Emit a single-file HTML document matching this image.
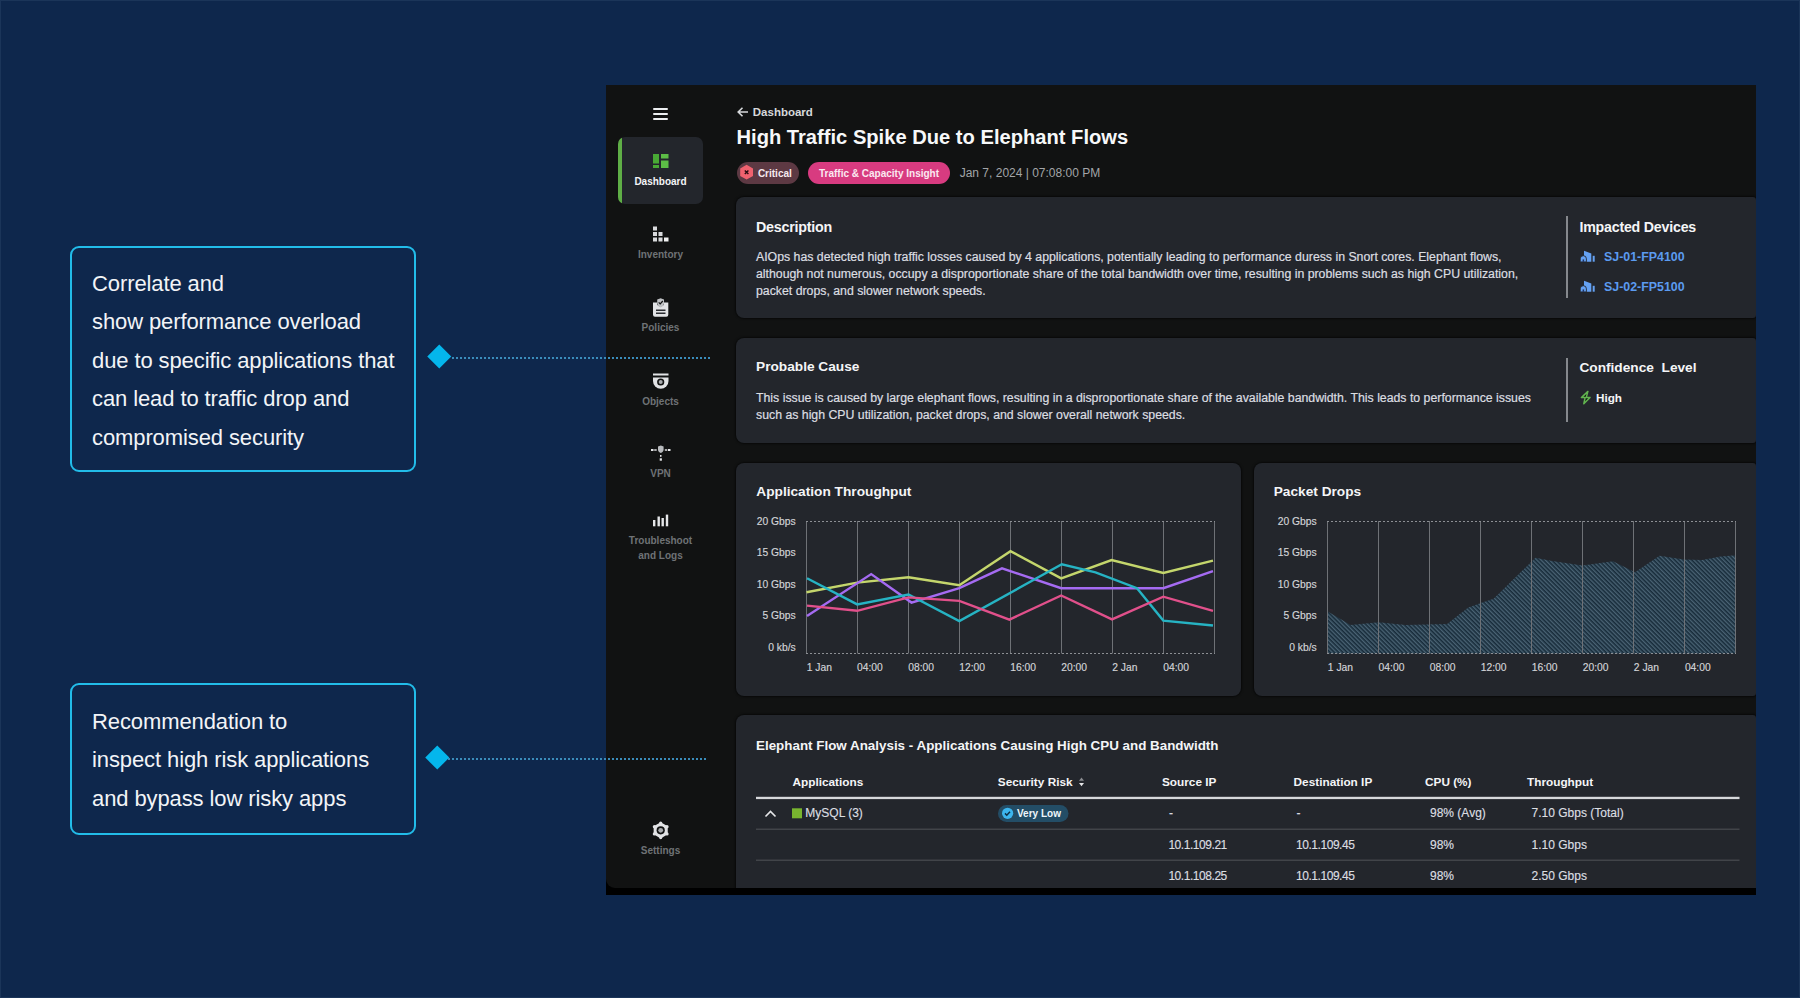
<!DOCTYPE html>
<html><head><meta charset="utf-8">
<style>
*{margin:0;padding:0;box-sizing:border-box}
html,body{width:1800px;height:998px;overflow:hidden}
body{background:#0e274c;font-family:"Liberation Sans",sans-serif;position:relative}
#edge{position:absolute;left:0;top:0;width:1800px;height:998px;border:1px solid #1b3559}
.a{position:absolute;white-space:nowrap;line-height:1}
.note{position:absolute;border:2px solid #22bce9;border-radius:9px}
.nt{position:absolute;left:92px;color:#f2f4f7;font-size:22px;line-height:1;white-space:nowrap;letter-spacing:-0.1px}
.dia{position:absolute;width:16.5px;height:16.5px;background:#04b6ec;transform:rotate(45deg)}
.dots{position:absolute;height:2px;background-image:linear-gradient(to right,#3a8cbb 50%,transparent 50%);background-size:4px 2px}
#frame{position:absolute;left:606px;top:85px;width:1150px;height:810px;background:#000}
#clip{position:absolute;left:606px;top:85px;width:1150px;height:803px;background:#111212;border-bottom-left-radius:9px;overflow:hidden}
#pg{position:absolute;left:-606px;top:-85px;width:1800px;height:998px}
.card{position:absolute;background:#23262c;border-radius:8px;box-shadow:0 0 2px 1px rgba(0,0,0,0.55)}
.h{position:absolute;white-space:nowrap;line-height:1;color:#f4f5f7;font-weight:bold;font-size:13.7px}
.b{position:absolute;white-space:nowrap;line-height:1;color:#dcdee1;font-size:12.3px;-webkit-text-stroke:0.2px #dcdee1}
.nav{position:absolute;left:607px;width:107px;text-align:center;color:#6f7276;font-size:10px;font-weight:bold;line-height:1;white-space:nowrap}
.yl{position:absolute;width:60px;text-align:right;color:#d3d5d8;font-size:10.3px;line-height:1;white-space:nowrap;-webkit-text-stroke:0.15px #d3d5d8}
.xl{position:absolute;color:#d3d5d8;font-size:10.3px;line-height:1;white-space:nowrap;-webkit-text-stroke:0.15px #d3d5d8}
.th{position:absolute;white-space:nowrap;line-height:1;color:#f4f5f7;font-weight:bold;font-size:11.8px}
.td{position:absolute;white-space:nowrap;line-height:1;color:#dcdee1;font-size:12px;-webkit-text-stroke:0.15px #dcdee1}
svg{position:absolute;left:0;top:0}
</style></head><body>
<div id="edge"></div>

<!-- annotation 1 -->
<div class="note" style="left:70px;top:246px;width:346px;height:226px"></div>
<div class="nt" style="top:272.6px">Correlate and</div>
<div class="nt" style="top:310.6px">show performance overload</div>
<div class="nt" style="top:350.1px">due to specific applications that</div>
<div class="nt" style="top:388px">can lead to traffic drop and</div>
<div class="nt" style="top:427.1px">compromised security</div>

<!-- annotation 2 -->
<div class="note" style="left:70px;top:682.6px;width:346px;height:152.6px"></div>
<div class="nt" style="top:710.8px">Recommendation to</div>
<div class="nt" style="top:748.8px">inspect high risk applications</div>
<div class="nt" style="top:787.6px">and bypass low risky apps</div>

<div id="frame"></div>
<div id="clip"><div id="pg">

<!-- sidebar -->
<div style="position:absolute;left:653px;top:107.5px;width:15px;height:2px;background:#eceef0;border-radius:1px"></div>
<div style="position:absolute;left:653px;top:112.5px;width:15px;height:2px;background:#eceef0;border-radius:1px"></div>
<div style="position:absolute;left:653px;top:117.5px;width:15px;height:2px;background:#eceef0;border-radius:1px"></div>

<div style="position:absolute;left:617.6px;top:137px;width:85.5px;height:66.5px;background:#23262c;border-radius:7px;overflow:hidden"><div style="position:absolute;left:0;top:0;width:4.5px;height:66.5px;background:#5fae46"></div></div>
<svg width="1800" height="998" viewBox="0 0 1800 998">
 <g fill="#48a935">
  <rect x="653" y="154" width="6" height="9.5"/>
  <rect x="661" y="154" width="7.5" height="4.5" fill="#5cbd46"/>
  <rect x="653" y="165" width="6" height="3"/>
  <rect x="661" y="160.5" width="7.5" height="7.5" fill="#5cbd46"/>
 </g>
 <!-- inventory -->
 <g fill="#d9dadc">
  <rect x="653" y="226.5" width="4" height="4"/>
  <rect x="653" y="232" width="4" height="4"/><rect x="658.5" y="232" width="4" height="4"/>
  <rect x="653" y="237.5" width="4" height="4"/><rect x="658.5" y="237.5" width="4" height="4"/><rect x="664" y="237.5" width="4.5" height="4" fill="#f2f2f2"/>
 </g>
 <!-- policies -->
 <path d="M653 302.5 h4 v2 a4 4 0 0 0 7 0 v-2 h4.3 v12.3 a2 2 0 0 1 -2 2 h-11.3 a2 2 0 0 1 -2 -2 z" fill="#e2e3e5"/>
 <path d="M657.2 299.5 l3.4 -1.2 l3.4 1.2 v3.5 c0 2.2 -1.6 3.6 -3.4 4.4 c-1.8 -0.8 -3.4 -2.2 -3.4 -4.4 z" fill="#bfc1c4"/>
 <path d="M658.7 302.3 l1.5 1.5 l2.6 -2.8" stroke="#111" stroke-width="1.2" fill="none"/>
 <rect x="656" y="309.5" width="9.5" height="1.5" fill="#2a2c30"/>
 <rect x="656" y="312.5" width="9.5" height="1.5" fill="#2a2c30"/>
 <!-- objects -->
 <rect x="653" y="373.5" width="15.5" height="2" fill="#e2e3e5"/>
 <path d="M653 377.5 h15.5 v3.5 a7.75 7.75 0 0 1 -15.5 0 z" fill="#e2e3e5"/>
 <circle cx="660.7" cy="382" r="3.6" fill="#111212"/>
 <circle cx="660.7" cy="382" r="2" fill="#a9abae"/>
 <!-- vpn -->
 <path d="M658 446.5 l2.8 -1 l2.8 1 v3 c0 1.8 -1.3 3 -2.8 3.6 c-1.5 -0.6 -2.8 -1.8 -2.8 -3.6 z" fill="#b9bbbe"/>
 <g fill="#e6e7e9"><rect x="651" y="449" width="2.5" height="2"/><rect x="654.2" y="449.3" width="2.5" height="1.4"/><rect x="664.8" y="449.3" width="2.5" height="1.4"/><rect x="668" y="449" width="2.5" height="2"/>
 <rect x="660" y="455" width="1.5" height="1.8"/><rect x="659.7" y="458.3" width="2.2" height="2.4"/></g>
 <!-- troubleshoot -->
 <g fill="#e6e7e9"><rect x="653" y="520" width="2.4" height="6.3"/><rect x="657.5" y="516.5" width="2.4" height="9.8"/><rect x="661.5" y="518" width="2.4" height="8.3"/><rect x="665.8" y="514.6" width="2.4" height="11.7"/></g>
 <!-- settings -->
 <path d="M660.70 823.10 L666.94 826.70 L666.94 833.90 L660.70 837.50 L654.46 833.90 L654.46 826.70 Z" fill="#e2e3e5" stroke="#e2e3e5" stroke-width="1.6" stroke-linejoin="round"/><circle cx="660.70" cy="823.00" r="1.6" fill="#e2e3e5"/><circle cx="667.02" cy="826.65" r="1.6" fill="#e2e3e5"/><circle cx="667.02" cy="833.95" r="1.6" fill="#e2e3e5"/><circle cx="660.70" cy="837.60" r="1.6" fill="#e2e3e5"/><circle cx="654.38" cy="833.95" r="1.6" fill="#e2e3e5"/><circle cx="654.38" cy="826.65" r="1.6" fill="#e2e3e5"/>
 <circle cx="660.7" cy="830.3" r="4.1" fill="#111212"/>
 <circle cx="660.7" cy="830.3" r="2.4" fill="#a9abae"/>
</svg>
<div class="nav" style="top:177.1px;color:#f4f5f7">Dashboard</div>
<div class="nav" style="top:249.6px">Inventory</div>
<div class="nav" style="top:323.4px">Policies</div>
<div class="nav" style="top:396.9px">Objects</div>
<div class="nav" style="top:469.4px">VPN</div>
<div class="nav" style="top:536.2px">Troubleshoot</div>
<div class="nav" style="top:551.3px">and Logs</div>
<div class="nav" style="top:846px">Settings</div>

<!-- header -->
<svg width="1800" height="998" viewBox="0 0 1800 998">
 <path d="M742.5 107.8 l-4.3 4.2 l4.3 4.2 M738.5 112 h9.5" stroke="#d6d8db" stroke-width="1.6" fill="none"/>
</svg>
<div class="a" style="left:752.8px;top:107px;font-size:11.5px;font-weight:bold;color:#d6d8db">Dashboard</div>
<div class="a" style="left:736.5px;top:126.9px;font-size:20.15px;font-weight:bold;color:#f7f8f9">High Traffic Spike Due to Elephant Flows</div>

<div style="position:absolute;left:737px;top:162px;width:62px;height:21.5px;border-radius:11px;background:#5d3943"></div>
<svg width="1800" height="998" viewBox="0 0 1800 998">
 <path d="M746.6 164.8 l6.4 3.7 v7.4 l-6.4 3.7 l-6.4 -3.7 v-7.4 z" fill="#f0626f"/>
 <path d="M744.8 170.5 l3.6 3.6 M748.4 170.5 l-3.6 3.6" stroke="#2a0d12" stroke-width="1.4"/>
</svg>
<div class="a" style="left:757.9px;top:168.5px;font-size:10px;font-weight:bold;color:#f6eaee">Critical</div>
<div style="position:absolute;left:808px;top:162px;width:142px;height:21.5px;border-radius:11px;background:#d83b80"></div>
<div class="a" style="left:819px;top:168.5px;font-size:10px;font-weight:bold;color:#fbe9f1">Traffic &amp; Capacity Insight</div>
<div class="a" style="left:959.7px;top:166.5px;font-size:12px;color:#a3a5a8">Jan 7, 2024 | 07:08:00 PM</div>

<!-- description card -->
<div class="card" style="left:736px;top:197px;width:1020px;height:121px;border-radius:8px 3px 3px 8px"></div>
<div class="h" style="left:756px;top:219.6px;font-size:14.3px;letter-spacing:-0.25px">Description</div>
<div class="b" style="left:756px;top:251.3px">AIOps has detected high traffic losses caused by 4 applications, potentially leading to performance duress in Snort cores. Elephant flows,</div>
<div class="b" style="left:756px;top:268px">although not numerous, occupy a disproportionate share of the total bandwidth over time, resulting in problems such as high CPU utilization,</div>
<div class="b" style="left:756px;top:284.7px">packet drops, and slower network speeds.</div>
<div style="position:absolute;left:1565.5px;top:216px;width:2px;height:82px;background:#85888d"></div>
<div class="h" style="left:1579.4px;top:220px;font-size:14.2px;letter-spacing:-0.2px">Impacted Devices</div>
<svg width="1800" height="998" viewBox="0 0 1800 998">
 <g fill="#64a1f3">
  <path d="M1584 250.8 L1591.3 253.4 V261.7 H1584 Z"/>
  <path d="M1580.2 261.9 V258.8 a3.1 3.1 0 0 1 6.2 0 V261.9 Z" stroke="#23262c" stroke-width="0.9"/>
  <rect x="1582.6" y="259.4" width="1.5" height="2.5" fill="#1e3566"/>
  <rect x="1592.7" y="255.8" width="2" height="5.9"/>
  <path d="M1584 280.8 L1591.3 283.4 V291.7 H1584 Z"/>
  <path d="M1580.2 291.9 V288.8 a3.1 3.1 0 0 1 6.2 0 V291.9 Z" stroke="#23262c" stroke-width="0.9"/>
  <rect x="1582.6" y="289.4" width="1.5" height="2.5" fill="#1e3566"/>
  <rect x="1592.7" y="285.8" width="2" height="5.9"/>
 </g>
</svg>
<div class="a" style="left:1604px;top:250.5px;font-size:12.4px;font-weight:bold;color:#5b9bf0">SJ-01-FP4100</div>
<div class="a" style="left:1604px;top:280.5px;font-size:12.4px;font-weight:bold;color:#5b9bf0">SJ-02-FP5100</div>

<!-- probable cause card -->
<div class="card" style="left:736px;top:338px;width:1020px;height:105px;border-radius:8px 3px 3px 8px"></div>
<div class="h" style="left:756px;top:360.1px">Probable Cause</div>
<div class="b" style="left:756px;top:392px">This issue is caused by large elephant flows, resulting in a disproportionate share of the available bandwidth. This leads to performance issues</div>
<div class="b" style="left:756px;top:408.6px">such as high CPU utilization, packet drops, and slower overall network speeds.</div>
<div style="position:absolute;left:1565.5px;top:358px;width:2px;height:64px;background:#85888d"></div>
<div class="h" style="left:1579.4px;top:360.6px;font-size:13.7px">Confidence&nbsp; Level</div>
<svg width="1800" height="998" viewBox="0 0 1800 998">
 <path d="M1587.9 391.4 L1581.4 397.6 L1585.1 397.6 L1583.8 403.8 L1590 397.4 L1586.3 397.4 Z" fill="#0f1a0f" stroke="#62b450" stroke-width="1.5" stroke-linejoin="round"/>
</svg>
<div class="a" style="left:1596px;top:392px;font-size:11.7px;font-weight:bold;color:#f4f5f7">High</div>

<!-- charts -->
<div class="card" style="left:736px;top:463px;width:505px;height:233px"></div>
<div class="card" style="left:1254px;top:463px;width:502px;height:233px;border-radius:8px 3px 3px 8px"></div>
<div class="h" style="left:756.3px;top:485.3px">Application Throughput</div>
<div class="h" style="left:1273.7px;top:485.3px">Packet Drops</div>

<div class="yl" style="left:735.7px;top:517px">20 Gbps</div>
<div class="yl" style="left:735.7px;top:548.4px">15 Gbps</div>
<div class="yl" style="left:735.7px;top:579.8px">10 Gbps</div>
<div class="yl" style="left:735.7px;top:611.2px">5 Gbps</div>
<div class="yl" style="left:735.7px;top:642.7px">0 kb/s</div>
<div class="xl" style="left:806.7px;top:662.5px">1 Jan</div>
<div class="xl" style="left:857px;top:662.5px">04:00</div>
<div class="xl" style="left:908.2px;top:662.5px">08:00</div>
<div class="xl" style="left:959.2px;top:662.5px">12:00</div>
<div class="xl" style="left:1010.2px;top:662.5px">16:00</div>
<div class="xl" style="left:1061.2px;top:662.5px">20:00</div>
<div class="xl" style="left:1112.2px;top:662.5px">2 Jan</div>
<div class="xl" style="left:1163.2px;top:662.5px">04:00</div>

<div class="yl" style="left:1256.7px;top:517px">20 Gbps</div>
<div class="yl" style="left:1256.7px;top:548.4px">15 Gbps</div>
<div class="yl" style="left:1256.7px;top:579.8px">10 Gbps</div>
<div class="yl" style="left:1256.7px;top:611.2px">5 Gbps</div>
<div class="yl" style="left:1256.7px;top:642.7px">0 kb/s</div>
<div class="xl" style="left:1327.8px;top:662.5px">1 Jan</div>
<div class="xl" style="left:1378.6px;top:662.5px">04:00</div>
<div class="xl" style="left:1429.7px;top:662.5px">08:00</div>
<div class="xl" style="left:1480.7px;top:662.5px">12:00</div>
<div class="xl" style="left:1531.8px;top:662.5px">16:00</div>
<div class="xl" style="left:1582.8px;top:662.5px">20:00</div>
<div class="xl" style="left:1633.8px;top:662.5px">2 Jan</div>
<div class="xl" style="left:1684.9px;top:662.5px">04:00</div>

<svg width="1800" height="998" viewBox="0 0 1800 998">
 <defs>
  <pattern id="hatch" patternUnits="userSpaceOnUse" width="3" height="3" patternTransform="rotate(-45)">
   <rect width="3" height="3" fill="#172b3a"/>
   <rect width="1.4" height="3" fill="#4a6374"/>
  </pattern>
 </defs>
 <g stroke="#6e7176" stroke-width="1">
  <path d="M806.5 521V653.5M857.5 521V653.5M908.5 521V653.5M959.5 521V653.5M1010.5 521V653.5M1061.5 521V653.5M1112.5 521V653.5M1163.5 521V653.5M1214.5 521V653.5"/>
 </g>
 <g stroke="#8c8f94" stroke-width="1" stroke-dasharray="2 2">
  <path d="M806 521.5H1215M806 653.5H1215"/>
 </g>
 <g fill="none" stroke-width="2.4" stroke-linejoin="miter">
  <polyline stroke="#c4d66c" points="806.5,592.2 857.2,582.6 908.5,577.2 959.3,585.2 1010.5,551.2 1061.2,578.4 1111.6,560.1 1163.3,572.9 1213.0,560.7"/>
  <polyline stroke="#a56bf2" points="807.0,616.1 871.2,574.1 911.5,602.6 959.3,588.1 1002.0,568.3 1061.2,588.2 1163.3,588.2 1213.0,571.1"/>
  <polyline stroke="#26b3c3" points="807.0,578.2 857.2,604.4 908.5,594.5 959.3,621.1 1061.8,564.3 1095.5,572.3 1137.0,588.2 1163.3,620.6 1213.0,625.5"/>
  <polyline stroke="#e1508b" points="807.0,605.6 857.2,610.8 908.5,597.4 959.3,600.9 1009.4,619.6 1061.2,595.5 1112.0,619.4 1163.3,596.7 1213.0,610.8"/>
 </g>

 <path d="M1327.8 653.5 V611.5 L1350.6 625 L1378.7 622.2 L1405.6 625 L1447.1 624.1 L1467.9 607.8 L1480.8 603 L1493.6 598.7 L1535.5 557.7 L1550.7 560.7 L1582.5 565.6 L1613 561.3 L1635 572.3 L1659.5 555.8 L1684 559.4 L1702.3 560 L1720.6 556.4 L1736 555.2 V653.5 Z" fill="url(#hatch)"/>
 <g stroke="#6e7176" stroke-width="1">
  <path d="M1327.5 521V653.5M1378.5 521V653.5M1429.5 521V653.5M1480.5 521V653.5M1531.5 521V653.5M1582.5 521V653.5M1633.5 521V653.5M1684.5 521V653.5M1735.5 521V653.5"/>
 </g>
 <g stroke="#8c8f94" stroke-width="1" stroke-dasharray="2 2">
  <path d="M1327 521.5H1736M1327 653.5H1736"/>
 </g>
</svg>

<!-- table -->
<div class="card" style="left:736px;top:715px;width:1020px;height:200px;border-radius:8px 3px 3px 8px"></div>
<div class="h" style="left:756px;top:738.6px;font-size:13.4px">Elephant Flow Analysis - Applications Causing High CPU and Bandwidth</div>
<div class="th" style="left:792.5px;top:776.7px">Applications</div>
<div class="th" style="left:997.8px;top:776.7px">Security Risk</div>
<div class="th" style="left:1162px;top:776.7px">Source IP</div>
<div class="th" style="left:1293.6px;top:776.7px">Destination IP</div>
<div class="th" style="left:1425px;top:776.7px">CPU (%)</div>
<div class="th" style="left:1527px;top:776.7px">Throughput</div>
<svg width="1800" height="998" viewBox="0 0 1800 998">
 <path d="M1081.5 777.5 l-2.5 3.3 h5 z" fill="#8a8c90"/>
 <path d="M1081.5 786.2 l-2.5 -3.3 h5 z" fill="#e6e7e9"/>
 <rect x="756" y="796.8" width="983.5" height="2.3" fill="#d6d8db"/>
 <rect x="756" y="828.6" width="983.5" height="1.2" fill="#4a4d52"/>
 <rect x="756" y="859.6" width="983.5" height="1.2" fill="#4a4d52"/>
 <path d="M765.5 816.5 l5 -5 l5 5" stroke="#e6e7e9" stroke-width="1.6" fill="none"/>
 <rect x="792" y="808.3" width="10" height="10" fill="#78b52f"/>
 <rect x="998" y="805" width="70.5" height="17" rx="8.5" fill="#234d66"/>
 <circle cx="1007.6" cy="813.3" r="5.6" fill="#3cb6ef"/>
 <path d="M1005 813.4 l1.8 1.8 l3.2 -3.4" stroke="#0f2e44" stroke-width="1.5" fill="none"/>
</svg>
<div class="td" style="left:805.3px;top:807.3px">MySQL (3)</div>
<div class="a" style="left:1017px;top:809.2px;font-size:10px;font-weight:bold;color:#eef6fb">Very Low</div>
<div class="td" style="left:1169px;top:807.3px">-</div>
<div class="td" style="left:1296.6px;top:807.3px">-</div>
<div class="td" style="left:1430px;top:807.3px">98% (Avg)</div>
<div class="td" style="left:1531.6px;top:807.3px">7.10 Gbps (Total)</div>
<div class="td" style="left:1168.4px;top:838.8px;letter-spacing:-0.45px">10.1.109.21</div>
<div class="td" style="left:1296px;top:838.8px;letter-spacing:-0.45px">10.1.109.45</div>
<div class="td" style="left:1430px;top:838.8px">98%</div>
<div class="td" style="left:1531.6px;top:838.8px">1.10 Gbps</div>
<div class="td" style="left:1168.4px;top:869.8px;letter-spacing:-0.45px">10.1.108.25</div>
<div class="td" style="left:1296px;top:869.8px;letter-spacing:-0.45px">10.1.109.45</div>
<div class="td" style="left:1430px;top:869.8px">98%</div>
<div class="td" style="left:1531.6px;top:869.8px">2.50 Gbps</div>

</div></div>
<div class="dia" style="left:431.2px;top:348px"></div>
<div class="dots" style="left:452px;top:356.7px;width:258px"></div>
<div class="dia" style="left:428.5px;top:748.5px"></div>
<div class="dots" style="left:448px;top:758px;width:260px"></div>
</body></html>
